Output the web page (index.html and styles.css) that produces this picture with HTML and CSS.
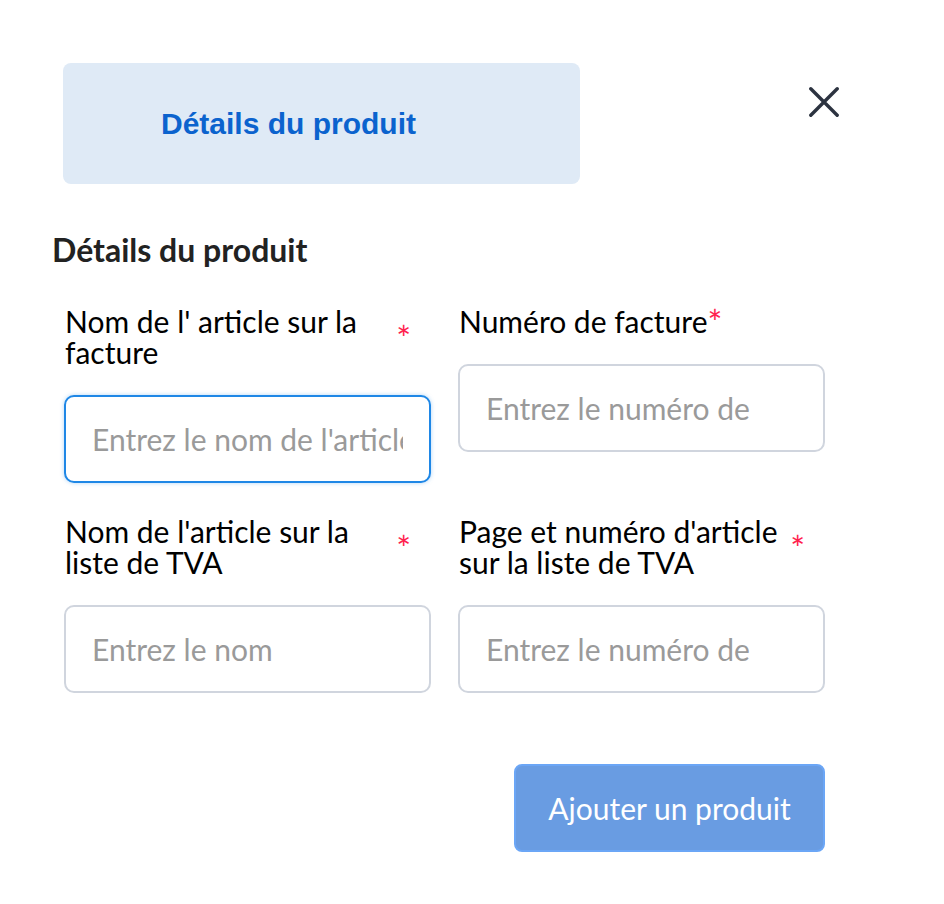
FILE: index.html
```html
<!DOCTYPE html>
<html lang="fr">
<head>
<meta charset="utf-8">
<title>Détails du produit</title>
<link rel="stylesheet" href="styles.css">
</head>
<body>
<div class="modal">
  <div class="modal-head">
    <div class="tab">Détails du produit</div>
    <button class="close" type="button" aria-label="Fermer">
      <svg width="30" height="30" viewBox="0 0 30 30"><path d="M1.8 1.8 L28.2 28.2 M28.2 1.8 L1.8 28.2" stroke="#2c3340" stroke-width="3.4" stroke-linecap="round" fill="none"/></svg>
    </button>
  </div>
  <h2 class="section-title">Détails du produit</h2>
  <div class="grid">
    <div class="field">
      <label class="label"><span class="label-text">Nom de l' article sur la facture</span><span class="req">*</span></label>
      <input class="input focused" type="text" placeholder="Entrez le nom de l'article">
    </div>
    <div class="field">
      <label class="label"><span class="label-text">Numéro de facture</span><span class="req">*</span></label>
      <input class="input" type="text" placeholder="Entrez le numéro de">
    </div>
    <div class="field">
      <label class="label"><span class="label-text">Nom de l'article sur la liste de TVA</span><span class="req">*</span></label>
      <input class="input" type="text" placeholder="Entrez le nom">
    </div>
    <div class="field">
      <label class="label"><span class="label-text">Page et numéro d'article sur la liste de TVA</span><span class="req">*</span></label>
      <input class="input" type="text" placeholder="Entrez le numéro de">
    </div>
  </div>
  <div class="actions">
    <button class="submit" type="button">Ajouter un produit</button>
  </div>
</div>
</body>
</html>
```
FILE: styles.css
```css
* { box-sizing: border-box; }
html, body { margin: 0; padding: 0; background: #fff; }
body { font-family: Lato, "Open Sans", sans-serif; color: #000; }

.modal {
  width: 944px;
  padding: 63px 0 0 52px;
}

.modal-head {
  display: flex;
  align-items: flex-start;
  margin-left: 11px;
}

.tab {
  width: 517px;
  height: 121px;
  background: #dfeaf6;
  border-radius: 8px;
  display: flex;
  align-items: center;
  padding-left: 98px;
  font-family: "Liberation Sans", Arial, sans-serif;
  font-weight: 700;
  font-size: 30px;
  color: #0b63ce;
}

.close {
  margin: 24px 0 0 229px;
  padding: 0;
  border: 0;
  background: none;
  width: 30px;
  height: 30px;
  cursor: pointer;
}
.close svg { display: block; }

.section-title {
  margin: 48px 0 0 0;
  font-size: 32px;
  font-weight: 700;
  line-height: 36px;
  color: #222;
}

.grid {
  display: grid;
  grid-template-columns: 367px 367px;
  column-gap: 27px;
  row-gap: 33px;
  align-items: start;
  margin: 38px 0 0 12px;
}

.field {
  display: flex;
  flex-direction: column;
}

.label {
  display: flex;
  align-items: center;
  padding: 0 20px 0 1px;
  font-size: 30px;
  line-height: 31px;
  color: #000;
}
.label-text { flex: 0 1 auto; }
.req {
  color: #ff1f4f;
  font-size: 35px;
  line-height: 31px;
  flex: none;
}

.input {
  margin-top: 27px;
  width: 367px;
  height: 88px;
  border: 2px solid #d0d5de;
  border-radius: 10px;
  padding: 0 26px;
  font-family: Lato, "Open Sans", sans-serif;
  font-size: 30px;
  color: #222;
  background: #fff;
  outline: none;
}
.input::placeholder { color: #9a9a9a; }
.input.focused {
  border-color: #1f87e6;
  box-shadow: 0 0 4px rgba(31, 135, 230, 0.35);
}

.actions {
  display: flex;
  justify-content: flex-end;
  width: 773px;
  margin-top: 71px;
}

.submit {
  width: 311px;
  height: 88px;
  background: #699ce2;
  border: 2px solid #6ba6f6;
  border-radius: 8px;
  color: #fff;
  font-family: Lato, "Open Sans", sans-serif;
  font-size: 30px;
  cursor: pointer;
}
```
